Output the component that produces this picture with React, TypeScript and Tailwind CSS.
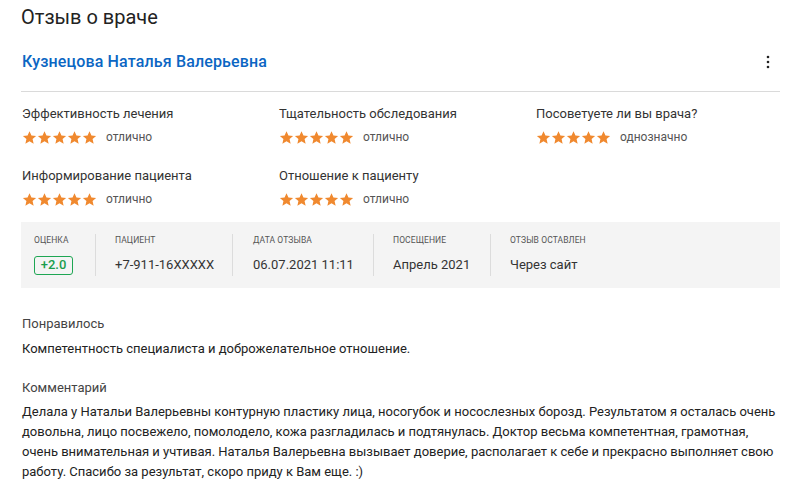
import React from "react";

const Star = () => (
  <svg width="15" height="15" viewBox="0 0 24 24" className="shrink-0">
    <path
      fill="#f0892f"
      d="M12 1.8l3.1 6.9 7.5.7-5.7 5 1.7 7.4L12 17.9l-6.6 3.9 1.7-7.4-5.7-5 7.5-.7z"
    />
  </svg>
);

const Rating = ({ label, value }: { label: string; value: string }) => (
  <div className="flex flex-col">
    <div className="text-[13px] leading-[20px] text-[#333]">{label}</div>
    <div className="mt-[4px] flex items-center">
      <div className="flex">
        <Star />
        <Star />
        <Star />
        <Star />
        <Star />
      </div>
      <span className="ml-[9px] text-[12px] leading-[18px] text-[#555]">{value}</span>
    </div>
  </div>
);

const InfoCol = ({
  label,
  children,
  className,
}: {
  label: string;
  children: React.ReactNode;
  className?: string;
}) => (
  <div className={"flex flex-col whitespace-nowrap " + (className ?? "")}>
    <div className="text-[8.5px] leading-[12px] uppercase text-[#555] tracking-[0.1px]">{label}</div>
    <div className="mt-[9px] flex h-[20px] items-center text-[13px] text-[#333]">{children}</div>
  </div>
);

const Sep = () => <div className="w-px shrink-0 self-stretch bg-[#dcdcdc]" />;

export default function App() {
  return (
    <div
      className="w-[800px] h-[491px] overflow-hidden bg-white pl-[21px] pr-[20px]"
      style={{ fontFamily: "Roboto, 'Noto Sans', sans-serif" }}
    >
      <h1 className="pt-[4px] text-[20px] leading-[26px] text-[#222] font-normal">Отзыв о враче</h1>
      <div className="mt-[21px] flex items-center justify-between">
        <div className="pl-[1px] text-[16px] leading-[22px] font-medium tracking-[0.15px] text-[#0b66c3]">
          Кузнецова Наталья Валерьевна
        </div>
        <svg width="4" height="14" viewBox="0 0 4 14" className="mr-[10px]">
          <circle cx="2" cy="2" r="1.3" fill="#222" />
          <circle cx="2" cy="7" r="1.3" fill="#222" />
          <circle cx="2" cy="12" r="1.3" fill="#222" />
        </svg>
      </div>
      <div className="mt-[18px] h-px bg-[#dadada]" />
      <div className="mt-[12px] grid grid-cols-[257px_257px_1fr] gap-y-[20px] pl-[1px]">
        <Rating label="Эффективность лечения" value="отлично" />
        <Rating label="Тщательность обследования" value="отлично" />
        <Rating label="Посоветуете ли вы врача?" value="однозначно" />
        <Rating label="Информирование пациента" value="отлично" />
        <Rating label="Отношение к пациенту" value="отлично" />
      </div>
      <div className="mt-[14px] flex h-[66px] items-center bg-[#f4f4f4] pl-[13px]">
        <div className="flex h-[42px] items-stretch">
          <InfoCol label="Оценка" className="w-[61px]">
            <span className="flex h-[19px] w-[39px] items-center justify-center rounded-[3px] border border-[#1ea653] text-[13px] font-medium text-[#1a9d4c]">
              +2.0
            </span>
          </InfoCol>
          <Sep />
          <InfoCol label="Пациент" className="w-[136px] pl-[19px]">+7-911-16XXXXX</InfoCol>
          <Sep />
          <InfoCol label="Дата отзыва" className="w-[140px] pl-[20px]">06.07.2021 11:11</InfoCol>
          <Sep />
          <InfoCol label="Посещение" className="w-[116px] pl-[19px]">Апрель 2021</InfoCol>
          <Sep />
          <InfoCol label="Отзыв оставлен" className="pl-[19px]">Через сайт</InfoCol>
        </div>
      </div>
      <div className="mt-[26px] pl-[1px] text-[13px] leading-[20px] text-[#444]">Понравилось</div>
      <div className="mt-[5px] pl-[1px] text-[13px] leading-[20px] text-[#222]">
        Компетентность специалиста и доброжелательное отношение.
      </div>
      <div className="mt-[19px] pl-[1px] text-[13px] leading-[20px] text-[#444]">Комментарий</div>
      <p className="mt-[4px] pl-[1px] pr-[4px] text-[13px] leading-[20px] text-[#222]">
        Делала у Натальи Валерьевны контурную пластику лица, носогубок и носослезных борозд. Результатом я
        осталась очень довольна, лицо посвежело, помолодело, кожа разгладилась и подтянулась. Доктор весьма
        компетентная, грамотная, очень внимательная и учтивая. Наталья Валерьевна вызывает доверие, располагает к
        себе и прекрасно выполняет свою работу. Спасибо за результат, скоро приду к Вам еще. :)
      </p>
    </div>
  );
}
